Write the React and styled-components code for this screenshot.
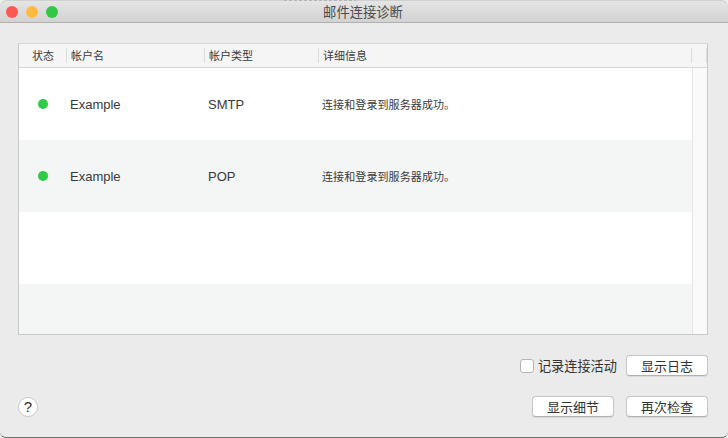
import React from "react";
import styled, { createGlobalStyle } from "styled-components";

const Global = createGlobalStyle`
  html, body { margin: 0; padding: 0; background: #ececec; }
  body { font-family: "Liberation Sans", "Noto Sans CJK SC", sans-serif; }
`;

const Backdrop = styled.div`
  width: 728px;
  height: 438px;
  overflow: hidden;
  background: #efefef;
`;

const Win = styled.div`
  width: 728px;
  height: 437px;
  display: flex;
  flex-direction: column;
  background: #ebebeb;
  border-radius: 5px 5px 6px 6px;
  border-bottom: 1px solid #6f6f6f;
  box-sizing: content-box;
  overflow: hidden;
`;

const TitleBar = styled.div`
  position: relative;
  height: 22px;
  flex: none;
  background: linear-gradient(#e6e6e6, #d2d2d2);
  border-bottom: 1px solid #b0b0b0;
  border-radius: 7px 7px 0 0;
  box-shadow: inset 0 1px 0 #d0d0d0;
  display: flex;
  align-items: center;
  justify-content: center;
`;

const GhostStrip = styled.div`
  position: absolute;
  left: 284px;
  top: 0;
  width: 72px;
  height: 1px;
  background: repeating-linear-gradient(90deg, #b4b4b4 0 3px, #dcdcdc 3px 5px);
`;

const Lights = styled.div`
  position: absolute;
  left: 6px;
  top: 6px;
  display: flex;
  gap: 8px;
`;

const Light = styled.span`
  width: 12px;
  height: 12px;
  border-radius: 50%;
  background: ${(p) => p.$c};
`;

const Title = styled.div`
  font-size: 13.3px;
  color: #4b4b4b;
  padding-top: 1px;
  margin-right: 2px;
`;

const Body = styled.div`
  flex: 1;
  display: flex;
  flex-direction: column;
  padding: 20px 20px 0 18px;
`;

const Table = styled.div`
  height: 292px;
  box-sizing: border-box;
  border: 1px solid #c8c8c8;
  border-top-color: #d8d8d8;
  background: #fff;
  display: flex;
  flex-direction: column;
  overflow: hidden;
`;

const Columns = "48px 138px 114px 373px 15px";

const Header = styled.div`
  height: 23px;
  flex: none;
  display: grid;
  grid-template-columns: ${Columns};
  background: #f5f5f5;
  border-bottom: 1px solid #d6d6d6;
  font-size: 11px;
  color: #3a3a3a;
`;

const HeadCell = styled.div`
  display: flex;
  align-items: center;
  padding-left: ${(p) => p.$pad ?? 4}px;
  padding-bottom: 2px;
  position: relative;
  &::after {
    content: "";
    display: block;
    position: absolute;
    right: 0;
    top: 4px;
    bottom: 4px;
    width: 1px;
    background: #dcdcdc;
  }
`;

const Rows = styled.div`
  flex: 1;
  display: flex;
  flex-direction: column;
  overflow: hidden;
`;

const Row = styled.div`
  height: 72px;
  flex: none;
  display: grid;
  grid-template-columns: ${Columns};
  align-items: center;
  background: ${(p) => (p.$alt ? "#f4f5f5" : "#ffffff")};
  color: #3a3a3a;
`;

const Cell = styled.div`
  padding-left: ${(p) => p.$pad ?? 3}px;
  padding-top: ${(p) => p.$top ?? 0}px;
  white-space: nowrap;
  font-size: ${(p) => p.$size ?? 13}px;
  letter-spacing: ${(p) => p.$track ?? 0}px;
`;

const Dot = styled.span`
  display: block;
  width: 10px;
  height: 10px;
  border-radius: 50%;
  background: #2ecb44;
  margin-left: 19px;
`;

const Gutter = styled.div`
  align-self: stretch;
  background: #fafafa;
  border-left: 1px solid #e6e6e6;
`;

const LogRow = styled.div`
  display: flex;
  justify-content: flex-end;
  align-items: center;
  margin-top: 20px;
  gap: 9px;
`;

const CheckLabel = styled.label`
  display: flex;
  align-items: center;
  gap: 4px;
  font-size: 13.2px;
  color: #333;
`;

const Box = styled.span`
  width: 12px;
  height: 12px;
  background: #fff;
  border: 1px solid #b4b4b4;
  border-radius: 3px;
`;

const Button = styled.button`
  width: 82px;
  height: 21px;
  padding: 0;
  background: #fff;
  border: 1px solid #c6c6c6;
  border-bottom-color: #b2b2b2;
  border-radius: 4px;
  font-family: inherit;
  font-size: 13px;
  color: #333;
  box-shadow: 0 0.5px 1px rgba(0, 0, 0, 0.08);
`;

const Footer = styled.div`
  display: flex;
  align-items: center;
  justify-content: space-between;
  margin-top: 20px;
`;

const Help = styled.span`
  width: 20px;
  height: 20px;
  box-sizing: border-box;
  border: 1px solid #c8c8c8;
  border-radius: 50%;
  background: #fff;
  display: flex;
  align-items: center;
  justify-content: center;
  font-size: 15px;
  color: #2e2e2e;
`;

const FooterButtons = styled.div`
  display: flex;
  gap: 12px;
`;

const rows = [
  { name: "Example", type: "SMTP", info: "连接和登录到服务器成功。", ok: true },
  { name: "Example", type: "POP", info: "连接和登录到服务器成功。", ok: true, alt: true },
  {},
  { alt: true },
];

export default function App() {
  return (
    <Backdrop>
      <Global />
      <Win>
        <TitleBar>
          <GhostStrip />
          <Lights>
            <Light $c="#fc5753" />
            <Light $c="#fdbc40" />
            <Light $c="#33c748" />
          </Lights>
          <Title>邮件连接诊断</Title>
        </TitleBar>
        <Body>
          <Table>
            <Header>
              <HeadCell $pad={13}>状态</HeadCell>
              <HeadCell>帐户名</HeadCell>
              <HeadCell>帐户类型</HeadCell>
              <HeadCell>详细信息</HeadCell>
              <HeadCell />
            </Header>
            <Rows>
              {rows.map((r, i) => (
                <Row key={i} $alt={r.alt}>
                  <Cell $pad={0}>{r.ok && <Dot />}</Cell>
                  <Cell $top={1}>{r.name}</Cell>
                  <Cell $top={1}>{r.type}</Cell>
                  <Cell $size={11} $track={0.1}>{r.info}</Cell>
                  <Gutter />
                </Row>
              ))}
            </Rows>
          </Table>
          <LogRow>
            <CheckLabel>
              <Box />
              记录连接活动
            </CheckLabel>
            <Button>显示日志</Button>
          </LogRow>
          <Footer>
            <Help>?</Help>
            <FooterButtons>
              <Button>显示细节</Button>
              <Button>再次检查</Button>
            </FooterButtons>
          </Footer>
        </Body>
      </Win>
    </Backdrop>
  );
}
